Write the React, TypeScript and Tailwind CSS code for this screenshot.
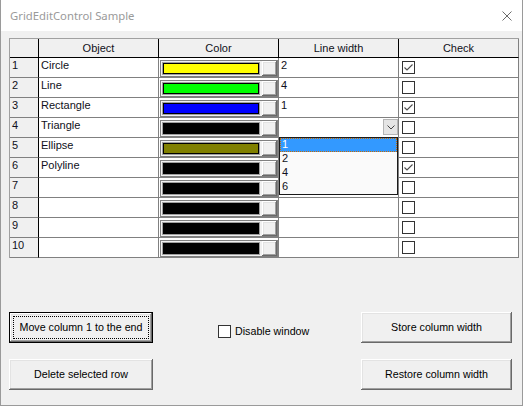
import React from 'react';

interface Row {
  name: string;
  colorClass: string;
  width: string;
  checked: boolean;
  combo?: boolean;
}

const rows: Row[] = [
  { name: 'Circle', colorClass: 'bg-[#ffff00]', width: '2', checked: true },
  { name: 'Line', colorClass: 'bg-[#00ff00]', width: '4', checked: false },
  { name: 'Rectangle', colorClass: 'bg-[#0000ff]', width: '1', checked: true },
  { name: 'Triangle', colorClass: 'bg-black', width: '', checked: false, combo: true },
  { name: 'Ellipse', colorClass: 'bg-[#808000]', width: '', checked: false },
  { name: 'Polyline', colorClass: 'bg-black', width: '', checked: true },
  { name: '', colorClass: 'bg-black', width: '', checked: false },
  { name: '', colorClass: 'bg-black', width: '', checked: false },
  { name: '', colorClass: 'bg-black', width: '', checked: false },
  { name: '', colorClass: 'bg-black', width: '', checked: false },
];

const bevel =
  'shadow-[inset_-1px_-1px_0_#696969,inset_1px_1px_0_#ffffff,inset_-2px_-2px_0_#a0a0a0,inset_2px_2px_0_#e3e3e3]';

function CheckBox({ checked }: { checked: boolean }) {
  return (
    <div className="w-[13px] h-[13px] border border-[#333333] bg-white flex items-center justify-center">
      {checked && (
        <svg width="11" height="11" viewBox="0 0 11 11">
          <polyline points="1.5,5.5 4,8 9.5,2.5" fill="none" stroke="#4d4d4d" strokeWidth="1.1" />
        </svg>
      )}
    </div>
  );
}

function ColorCell({ colorClass }: { colorClass: string }) {
  return (
    <div className="h-[20px] border-r border-b border-[#808080] pl-px pt-[2px] bg-white">
      <div className="w-[118px] h-[17px] border border-[#808080] bg-[#f0f0f0] flex">
        <div className="ml-px my-px w-[98px] border border-[#a0a0a0] bg-white">
          <div className={`h-full border border-black ${colorClass}`} />
        </div>
        <div className={`ml-auto w-[15px] h-[15px] bg-[#f0f0f0] ${bevel}`} />
      </div>
    </div>
  );
}

function Button({ label, isDefault }: { label: string; isDefault?: boolean }) {
  if (isDefault) {
    return (
      <div className="h-[31px] border border-black bg-[#f0f0f0]">
        <div className={`relative h-full flex items-center justify-center ${bevel}`}>
          <span className="absolute inset-[3px] border border-dotted border-black" />
          <span>{label}</span>
        </div>
      </div>
    );
  }
  return (
    <div className={`h-[31px] bg-[#f0f0f0] flex items-center justify-center ${bevel}`}>
      {label}
    </div>
  );
}

export default function App() {
  return (
    <div className="w-[523px] h-[406px] bg-[#f0f0f0] border-x border-b border-[#9a9a9a] flex flex-col font-['Liberation_Sans',Arial,sans-serif] text-[11px] leading-[13px] text-[#101020]">
      {/* Title bar */}
      <div className="h-[31px] bg-white flex items-center pl-[9px] pr-[10px]">
        <span className="font-['Noto_Sans',sans-serif] text-[11.3px] text-[#9a9a9a]">GridEditControl Sample</span>
        <svg className="ml-auto" width="10" height="10" viewBox="0 0 10 10">
          <path d="M0.5 0.5 L9.5 9.5 M9.5 0.5 L0.5 9.5" stroke="#6b6b6b" strokeWidth="1" />
        </svg>
      </div>

      {/* Grid */}
      <div className="ml-[8px] mt-[7px] w-[510px] border-t border-l border-[#a0a0a0] grid grid-cols-[29px_120px_120px_120px_120px]">
        <div className="h-[19px] bg-[#f0f0f0] border-r border-b border-black" />
        <div className="h-[19px] bg-[#f0f0f0] border-r border-b border-black flex items-center justify-center">Object</div>
        <div className="h-[19px] bg-[#f0f0f0] border-r border-b border-black flex items-center justify-center">Color</div>
        <div className="h-[19px] bg-[#f0f0f0] border-r border-b border-black flex items-center justify-center">Line width</div>
        <div className="h-[19px] bg-[#f0f0f0] border-b border-b-black border-r border-r-[#808080] flex items-center justify-center">Check</div>

        {rows.map((row, i) => (
          <React.Fragment key={i}>
            <div className="h-[20px] bg-[#f0f0f0] border-r border-r-black border-b border-b-[#808080] pl-[2px] pt-px">
              {i + 1}
            </div>
            <div className="h-[20px] bg-white border-r border-b border-[#808080] pl-[2px] pt-px">{row.name}</div>
            <ColorCell colorClass={row.colorClass} />
            <div className="relative h-[20px] bg-white border-r border-b border-[#808080] pl-[2px] pt-px">
              {row.width}
              {row.combo && (
                <>
                  <div className="absolute right-0 top-px w-[15px] h-[16px] bg-[#e5e5e5] border border-[#b5b5b5] flex items-center justify-center">
                    <svg width="8" height="5" viewBox="0 0 8 5">
                      <polyline points="0.5,0.5 4,4 7.5,0.5" fill="none" stroke="#444444" strokeWidth="1" />
                    </svg>
                  </div>
                  <div className="absolute z-10 left-0 top-[19px] w-[119px] border border-[#1a1a1a] bg-[#fafafa]">
                    <div className="h-[14px] bg-[#3399ff] text-white pl-[2px] outline outline-1 outline-dotted outline-[#c86a00] -outline-offset-1">1</div>
                    <div className="h-[14px] pl-[2px]">2</div>
                    <div className="h-[14px] pl-[2px]">4</div>
                    <div className="h-[14px] pl-[2px]">6</div>
                  </div>
                </>
              )}
            </div>
            <div className="h-[20px] bg-white border-r border-b border-[#808080] pl-[3px] pt-[3px]">
              <CheckBox checked={row.checked} />
            </div>
          </React.Fragment>
        ))}
      </div>

      {/* Buttons */}
      <div className="mt-[54px] ml-[8px] mr-[10px] flex text-[10.7px] text-black">
        <div className="w-[144px] flex flex-col gap-[16px]">
          <Button label="Move column 1 to the end" isDefault />
          <Button label="Delete selected row" />
        </div>
        <div className="ml-[65px] mt-[13px] h-[13px] flex items-center gap-[4px]">
          <div className="w-[13px] h-[13px] border border-[#333333] bg-white" />
          <span>Disable window</span>
        </div>
        <div className="ml-auto w-[151px] flex flex-col gap-[16px]">
          <Button label="Store column width" />
          <Button label="Restore column width" />
        </div>
      </div>
    </div>
  );
}
